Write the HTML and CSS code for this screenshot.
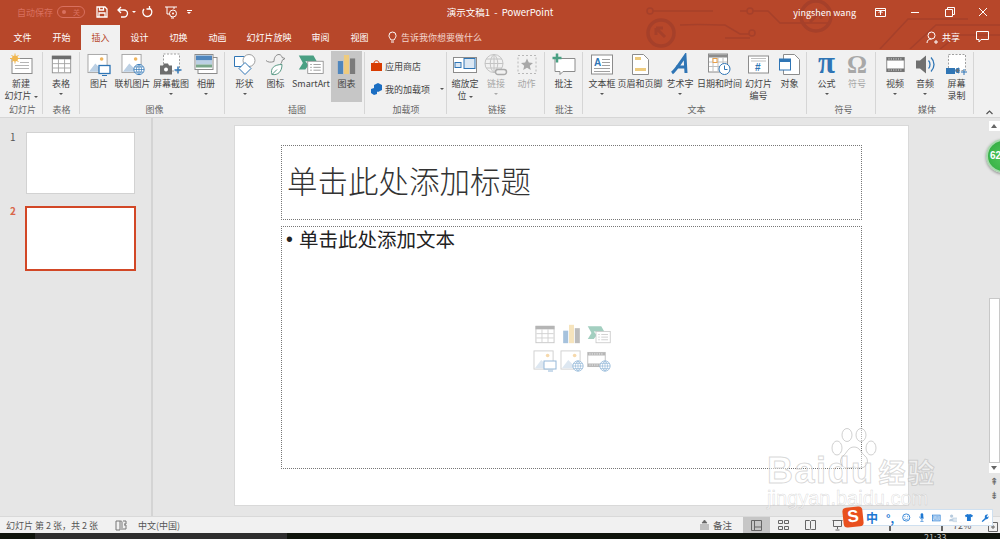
FILE: index.html
```html
<!DOCTYPE html>
<html lang="zh-CN">
<head>
    <meta charset="UTF-8">
    <title>演示文稿1 - PowerPoint</title>
    <link rel="stylesheet" href="styles.css">
</head>
<body>
    <!-- Shared icons -->
    <svg class="sprite" aria-hidden="true">
        <symbol id="i-table" viewBox="0 0 24 22">
            <rect x="1.5" y="1.5" width="21" height="19" fill="#fff" stroke="#8c8c8c"/>
            <rect x="1" y="1" width="22" height="4" fill="#6d6d6d"/>
            <path d="M8.5 5v15M15.5 5v15M2 10h20M2 15h20" stroke="#a0a0a0" fill="none"/>
        </symbol>
        <symbol id="i-chart" viewBox="0 0 22 24">
            <rect x="1" y="8" width="6" height="15" fill="#4f86bd"/>
            <rect x="8" y="1" width="6" height="22" fill="#eecb7e"/>
            <rect x="15" y="5" width="6" height="18" fill="#7b7b7b"/>
        </symbol>
        <symbol id="i-smartart" viewBox="0 0 32 24">
            <path d="M1 1h18l4 7H9l4 5-4 5H1l5-8z" fill="#4aa083"/>
            <rect x="12" y="8" width="19" height="15" fill="#fff" stroke="#8c8c8c"/>
            <path d="M15 12h2M19 12h9M15 15.500h2M19 15.500h9M15 19h2M19 19h9" stroke="#8c8c8c" fill="none"/>
        </symbol>
        <symbol id="i-picture" viewBox="0 0 24 22">
            <rect x="1" y="1" width="21" height="20" fill="#fff" stroke="#a0a0a0"/>
            <circle cx="16" cy="6" r="2" fill="#efb45c"/>
            <path d="M2 20l7-9 5 5 2-2 5 6z" fill="#bcd0e4"/>
        </symbol>
        <symbol id="i-globe" viewBox="0 0 14 14">
            <circle cx="7" cy="7" r="6" fill="#fff" stroke="#2f75b5"/>
            <path d="M1 7h12M2 4h10M2 10h10M7 1v12M7 1C3 4 3 10 7 13M7 1c4 3 4 9 0 12" fill="none" stroke="#2f75b5" stroke-width=".8"/>
        </symbol>
        <symbol id="i-film" viewBox="0 0 24 20">
            <rect x="1" y="1" width="22" height="18" fill="#fff" stroke="#707070"/>
            <path d="M1 1h22v4H1zM1 15h22v4H1z" fill="#707070"/>
            <path d="M3 3h1.500M6 3h1.500M9 3h1.500M12 3h1.500M15 3h1.500M18 3h1.500M3 17h1.500M6 17h1.500M9 17h1.500M12 17h1.500M15 17h1.500M18 17h1.500" stroke="#fff" fill="none"/>
        </symbol>
    </svg>

    <div class="app">
        <header class="top">
            <!-- Circuit pattern behind the title bar -->
            <svg class="circuit" viewBox="0 0 360 49" aria-hidden="true">
                <g fill="none" stroke="#a6402a" stroke-width="1.500">
                    <circle cx="10" cy="11" r="3"/>
                    <path d="M13 11h60"/>
                    <circle cx="21" cy="33" r="13" stroke-width="3.500"/>
                    <path d="M16 28l9 9M16 28h7M16 28v7" stroke-width="3"/>
                    <path d="M40 25c20-1 30 0 45 0l15 9h9"/>
                    <circle cx="112" cy="33" r="3"/>
                    <circle cx="110" cy="11" r="3"/>
                    <path d="M100 11h7M113 11h15l12 12h50M85 38h25"/>
                    <circle cx="176" cy="16" r="15" stroke-width="3.500"/>
                    <path d="M170 22l11-11M181 11h-8M181 11v8" stroke-width="3"/>
                    <path d="M240 49l28-30h60M270 49l26-24h64M300 49l18-14h42"/>
                </g>
            </svg>

            <div class="title-bar">
                <div class="quick">
                    <span class="autosave">自动保存</span>
                    <span class="toggle"><i></i>关</span>
                    <svg class="qa qa-save" width="12" height="12" viewBox="0 0 12 12"><path d="M1 1h8l2 2v8H1zM3.500 1v3h4V1M3 11V7h6v4" fill="none" stroke="#fff" stroke-width="1.300"/></svg>
                    <svg class="qa qa-undo" width="12" height="12" viewBox="0 0 12 12"><path d="M4 1L1 4l3 3M1 4h6a3.500 3.500 0 0 1 0 7H4" fill="none" stroke="#fff" stroke-width="1.300"/></svg>
                    <span class="caret caret-light"></span>
                    <svg class="qa qa-redo" width="12" height="12" viewBox="0 0 12 12"><path d="M9 3a4.500 4.500 0 1 1-5-1.200M3.500 0v3h3" fill="none" stroke="#fff" stroke-width="1.300" transform="matrix(-1 0 0 1 12 0)"/></svg>
                    <svg class="qa qa-show" width="14" height="13" viewBox="0 0 14 13"><path d="M1 1h12M3 1v7h3M10 1v2M7 12h3" fill="none" stroke="#fff"/><circle cx="9" cy="7.500" r="3.500" fill="none" stroke="#fff"/><circle cx="9" cy="7.500" r="1" fill="#fff"/></svg>
                    <span class="more-caret"></span>
                </div>
                <div class="doc-title">演示文稿1&nbsp; -&nbsp; PowerPoint</div>
                <div class="win">
                    <span class="user">yingshen wang</span>
                    <svg class="win-ico ico-ribbon" width="11" height="9" viewBox="0 0 11 9"><path d="M.5.500h10v8H.5zM.5 2.500h10M5.500 3v4M3.500 5l2-2 2 2" fill="none" stroke="#fff"/></svg>
                    <svg class="win-ico ico-min" width="10" height="9" viewBox="0 0 10 9"><path d="M1 4.500h8" stroke="#fff"/></svg>
                    <svg class="win-ico ico-max" width="10" height="10" viewBox="0 0 10 10"><path d="M.5 2.500h7v7h-7zM2.500 2.500v-2h7v7h-2" fill="none" stroke="#fff"/></svg>
                    <svg class="win-ico ico-close" width="10" height="10" viewBox="0 0 10 10"><path d="M1 1l8 8M9 1L1 9" stroke="#fff"/></svg>
                </div>
            </div>

            <nav class="tabs">
                <span class="tab">文件</span>
                <span class="tab">开始</span>
                <span class="tab active">插入</span>
                <span class="tab">设计</span>
                <span class="tab">切换</span>
                <span class="tab">动画</span>
                <span class="tab tab-wide">幻灯片放映</span>
                <span class="tab">审阅</span>
                <span class="tab">视图</span>
                <span class="tell">
                    <svg width="9" height="13" viewBox="0 0 9 13"><path d="M3 9C2 7 1 6.500 1 4.500a3.500 3.500 0 0 1 7 0C8 6.500 7 7 6 9zM3 11h3" fill="none" stroke="#fff"/></svg>
                    告诉我你想要做什么
                </span>
                <span class="share">
                    <svg width="12" height="13" viewBox="0 0 12 13"><circle cx="5.500" cy="4.500" r="3.500" fill="none" stroke="#fff"/><path d="M1 12c0-3 2-4 4.500-4M8 11h4M10 9v4" fill="none" stroke="#fff"/></svg>
                    共享
                </span>
                <svg class="comment" width="13" height="12" viewBox="0 0 13 12"><path d="M.5.500h12v8H5L3 11V8.500H.5z" fill="none" stroke="#fff"/></svg>
            </nav>
        </header>

        <section class="ribbon">
            <div class="group g-slides">
                <div class="items">
                    <div class="item w38">
                        <svg class="icon" width="24" height="22" viewBox="0 0 24 22"><rect x="3" y="5" width="20" height="15" fill="#fff" stroke="#8c8c8c"/><path d="M11 9h9M6 12h14M6 15h14" stroke="#b5b5b5" fill="none"/><circle cx="6" cy="5" r="3" fill="#f0b64e"/><path d="M6 0v10M1 5h10M2.500 1.500l7 7M9.500 1.500l-7 7" stroke="#f0b64e" fill="none"/></svg>
                        <span class="label">新建<br>幻灯片 <i class="caret"></i></span>
                    </div>
                </div>
                <div class="group-name">幻灯片</div>
            </div>
            <div class="group g-table">
                <div class="items">
                    <div class="item w36">
                        <svg class="icon" width="21" height="19"><use href="#i-table"/></svg>
                        <span class="label">表格</span><i class="caret"></i>
                    </div>
                </div>
                <div class="group-name">表格</div>
            </div>
            <div class="group g-images">
                <div class="items">
                    <div class="item w30">
                        <svg class="icon" width="24" height="22" viewBox="0 0 24 22"><use href="#i-picture" width="22" height="20"/><rect x="12" y="12" width="11" height="8" fill="#fff" stroke="#2f75b5" stroke-width="1.300"/><path d="M15 22h5" stroke="#2f75b5"/></svg>
                        <span class="label">图片</span>
                    </div>
                    <div class="item w37">
                        <svg class="icon" width="24" height="22" viewBox="0 0 24 22"><use href="#i-picture" width="22" height="20"/><use href="#i-globe" x="12" y="10" width="12" height="12"/></svg>
                        <span class="label">联机图片</span>
                    </div>
                    <div class="item w40">
                        <svg class="icon" width="24" height="22" viewBox="0 0 24 22"><rect x="4.500" y=".5" width="16" height="17" fill="#fff" stroke="#a0a0a0" stroke-dasharray="2 1.500"/><path d="M1 12h3l1-2h4l1 2h3v9H1z" fill="#6d6d6d"/><circle cx="7" cy="16" r="2" fill="#fff"/><path d="M19 13v7M15.500 16.500h7" stroke="#2f75b5" stroke-width="1.500"/></svg>
                        <span class="label">屏幕截图</span><i class="caret"></i>
                    </div>
                    <div class="item w30">
                        <svg class="icon" width="24" height="22" viewBox="0 0 24 22"><rect x="4" y="4" width="19" height="16" fill="#fff" stroke="#8c8c8c"/><rect x="1" y="1" width="18" height="15" fill="#fff" stroke="#8c8c8c"/><rect x="2" y="2" width="16" height="5" fill="#4f86bd"/><path d="M2 7h16v4H2z" fill="#bcd0e4"/><path d="M2 11h16v3H2z" fill="#79a689"/></svg>
                        <span class="label">相册</span><i class="caret"></i>
                    </div>
                </div>
                <div class="group-name">图像</div>
            </div>
            <div class="group g-illus">
                <div class="items">
                    <div class="item w31">
                        <svg class="icon" width="24" height="22" viewBox="0 0 24 22"><path d="M1.500 3h11v10h-11z" fill="#fff" stroke="#2f75b5"/><circle cx="16" cy="7" r="6" fill="#fff" stroke="#a0a0a0"/><path d="M12 21l-6-6 6-6 6 6z" fill="#fff" stroke="#2f75b5"/></svg>
                        <span class="label">形状</span><i class="caret"></i>
                    </div>
                    <div class="item w31">
                        <svg class="icon" width="24" height="22" viewBox="0 0 24 22"><path d="M2 7c2 2 5 2 8 1 0-4 2-7 5-7 2 0 3 2 3 3l3 1-3 2c0 2-1 3-2 4" fill="none" stroke="#8c8c8c"/><path d="M8 21c-2-6 2-10 10-10 0 7-4 11-10 10zM8 21l5-5" fill="#fff" stroke="#5a9a86"/></svg>
                        <span class="label">图标</span>
                    </div>
                    <div class="item w40">
                        <svg class="icon" width="26" height="20"><use href="#i-smartart"/></svg>
                        <span class="label">SmartArt</span>
                    </div>
                    <div class="item w31 selected">
                        <svg class="icon" width="19" height="21"><use href="#i-chart"/></svg>
                        <span class="label">图表</span>
                    </div>
                </div>
                <div class="group-name">插图</div>
            </div>
            <div class="group g-addins">
                <div class="items addins">
                    <div class="addin">
                        <svg width="11" height="12" viewBox="0 0 11 12"><path d="M0 3h11v8H0z" fill="#d83b01"/><path d="M3 3c0-3 5-3 5 0" fill="none" stroke="#d83b01"/></svg>
                        应用商店
                    </div>
                    <div class="addin">
                        <svg width="11" height="12" viewBox="0 0 11 12"><path d="M3 2l4-2 4 2v5l-4 2-1-.500V11l-3 1-3-2V6l3-1z" fill="#1b6ec2"/></svg>
                        我的加载项
                        <i class="caret caret-side"></i>
                    </div>
                </div>
                <div class="group-name">加载项</div>
            </div>
            <div class="group g-links">
                <div class="items">
                    <div class="item w32">
                        <svg class="icon" width="24" height="18" viewBox="0 0 24 18"><rect x=".5" y="2" width="23" height="15" fill="#fff" stroke="#8c8c8c"/><rect x="11" y="3" width="11" height="10" fill="#dbe7f3" stroke="#2f75b5"/><rect x="2" y="7" width="6" height="5" fill="#dbe7f3" stroke="#2f75b5"/></svg>
                        <span class="label">缩放定<br>位 <i class="caret"></i></span>
                    </div>
                    <div class="item w30 off">
                        <svg class="icon" width="24" height="22" viewBox="0 0 24 22"><circle cx="10" cy="10" r="9" fill="none" stroke="#c4c4c4"/><path d="M1 10h18M2 5.500h16M2 14.500h16M10 1v18M10 1C5 5 5 15 10 19M10 1c5 4 5 14 0 18" fill="none" stroke="#c4c4c4"/><path d="M14 16h6a2.500 2.500 0 0 1 0 5h-6a2.500 2.500 0 0 1 0-5z" fill="#f1f1f1" stroke="#aaa" stroke-width="1.500"/></svg>
                        <span class="label">链接</span><i class="caret"></i>
                    </div>
                    <div class="item w31 off">
                        <svg class="icon" width="20" height="20" viewBox="0 0 20 20"><rect x="1" y="1" width="18" height="18" fill="none" stroke="#b8b8b8" stroke-dasharray="2 2"/><path d="M10 4l1.800 4 4.200.4-3.200 2.800 1 4.300L10 13.300l-3.800 2.200 1-4.300L4 8.400 8.200 8z" fill="#a8a8a8"/></svg>
                        <span class="label">动作</span>
                    </div>
                </div>
                <div class="group-name">链接</div>
            </div>
            <div class="group g-comment">
                <div class="items">
                    <div class="item w37">
                        <svg class="icon" width="24" height="22" viewBox="0 0 24 22"><path d="M3 5h20v13H11l-3 3v-3H3z" fill="#fff" stroke="#8c8c8c"/><path d="M5 0v9M.5 4.500h9" stroke="#4aa083" stroke-width="2.500"/></svg>
                        <span class="label">批注</span>
                    </div>
                </div>
                <div class="group-name">批注</div>
            </div>
            <div class="group g-text">
                <div class="items">
                    <div class="item w32">
                        <svg class="icon" width="22" height="20" viewBox="0 0 22 20"><rect x=".5" y=".5" width="21" height="19" fill="#fff" stroke="#8c8c8c"/><text x="3" y="11" class="icon-letter">A</text><path d="M11 5h8M11 8h8M11 11h8M3 14h16M3 17h16" stroke="#a0a0a0" fill="none"/></svg>
                        <span class="label">文本框</span><i class="caret"></i>
                    </div>
                    <div class="item w44">
                        <svg class="icon" width="17" height="21" viewBox="0 0 17 21"><path d="M.5.500h11l5 5v15H.5z" fill="#fff" stroke="#8c8c8c"/><rect x="3" y="3" width="6" height="3" fill="#eecb7e"/><rect x="3" y="14" width="11" height="3" fill="#eecb7e"/></svg>
                        <span class="label">页眉和页脚</span>
                    </div>
                    <div class="item w36">
                        <svg class="icon" width="20" height="21" viewBox="0 0 20 21"><path d="M2 19c4-3 8-10 13-17l1 17M6 13h10" fill="none" stroke="#2f75b5" stroke-width="3"/></svg>
                        <span class="label">艺术字</span><i class="caret"></i>
                    </div>
                    <div class="item w43">
                        <svg class="icon" width="23" height="22" viewBox="0 0 23 22"><rect x=".5" y=".5" width="19" height="18" fill="#fff" stroke="#8c8c8c"/><rect x="1" y="1" width="18" height="3" fill="#8c8c8c"/><path d="M5 4v14M10 4v14M15 4v14M1 8.500h18M1 13h18" stroke="#c0c0c0" fill="none"/><rect x="5" y="5" width="4" height="4" fill="#fff" stroke="#e8a04a"/><circle cx="16.500" cy="15.500" r="5.500" fill="#fff" stroke="#2f75b5"/><path d="M16.500 12v4h3" fill="none" stroke="#2f75b5"/></svg>
                        <span class="label">日期和时间</span>
                    </div>
                    <div class="item w35">
                        <svg class="icon" width="21" height="18" viewBox="0 0 21 18"><rect x=".5" y=".5" width="20" height="17" fill="#fff" stroke="#8c8c8c"/><path d="M3 3h15M3 5.500h15" stroke="#c0c0c0"/><text x="7" y="15" class="icon-hash">#</text></svg>
                        <span class="label">幻灯片<br>编号</span>
                    </div>
                    <div class="item w27">
                        <svg class="icon" width="21" height="21" viewBox="0 0 21 21"><path d="M4.500.500h11l5 5v15h-16z" fill="#fff" stroke="#8c8c8c"/><rect x=".5" y="5" width="11" height="11" fill="#fff" stroke="#2f75b5"/><rect x="1" y="5" width="10" height="3" fill="#2f75b5"/></svg>
                        <span class="label">对象</span>
                    </div>
                </div>
                <div class="group-name">文本</div>
            </div>
            <div class="group g-symbols">
                <div class="items">
                    <div class="item w31">
                        <span class="glyph glyph-pi">π</span>
                        <span class="label">公式</span><i class="caret"></i>
                    </div>
                    <div class="item w30 off">
                        <span class="glyph glyph-omega">Ω</span>
                        <span class="label">符号</span>
                    </div>
                </div>
                <div class="group-name">符号</div>
            </div>
            <div class="group g-media">
                <div class="items">
                    <div class="item w30">
                        <svg class="icon" width="19" height="18"><use href="#i-film"/></svg>
                        <span class="label">视频</span><i class="caret"></i>
                    </div>
                    <div class="item w30">
                        <svg class="icon" width="21" height="20" viewBox="0 0 21 20"><path d="M1 6h4l6-5v18l-6-5H1z" fill="#707070"/><path d="M13.500 6c2 2 2 6 0 8M16 3c4 4 4 10 0 14" fill="none" stroke="#2f75b5" stroke-width="1.300"/></svg>
                        <span class="label">音频</span><i class="caret"></i>
                    </div>
                    <div class="item w33">
                        <svg class="icon" width="22" height="21" viewBox="0 0 22 21"><rect x="2.500" y=".5" width="17" height="16" fill="#fff" stroke="#a0a0a0" stroke-dasharray="2 1.500"/><rect x="0" y="14" width="9" height="6" fill="#2f75b5"/><path d="M10 15l3-1v5l-3-1zM18 15v6M15 18h6" fill="#707070" stroke="#2f75b5"/></svg>
                        <span class="label">屏幕<br>录制</span>
                    </div>
                </div>
                <div class="group-name">媒体</div>
            </div>
            <svg class="collapse" width="7" height="5" viewBox="0 0 7 5"><path d="M.5 4l3-3 3 3" fill="none" stroke="#555" stroke-width="1.200"/></svg>
        </section>

        <main class="work">
            <aside class="slides">
                <div class="slide-row">
                    <span class="num">1</span>
                    <div class="thumb"></div>
                </div>
                <div class="slide-row current">
                    <span class="num">2</span>
                    <div class="thumb"></div>
                </div>
            </aside>
            <div class="canvas">
                <div class="slide">
                    <div class="ph ph-title">单击此处添加标题</div>
                    <div class="ph ph-body">
                        <div class="body-text"><span class="bullet">•</span>单击此处添加文本</div>
                        <div class="content-icons">
                            <svg width="22" height="19"><use href="#i-table"/></svg>
                            <svg width="19" height="20"><use href="#i-chart"/></svg>
                            <svg width="24" height="19"><use href="#i-smartart"/></svg>
                            <svg width="24" height="22" viewBox="0 0 24 22"><use href="#i-picture" width="22" height="20"/><rect x="11" y="11" width="12" height="8" fill="#fff" stroke="#2f75b5"/><path d="M15 21h5" stroke="#2f75b5"/></svg>
                            <svg width="24" height="22" viewBox="0 0 24 22"><use href="#i-picture" width="22" height="20"/><use href="#i-globe" x="12" y="10" width="12" height="12"/></svg>
                            <svg width="24" height="22" viewBox="0 0 24 22"><use href="#i-film" width="19" height="19" y="0"/><use href="#i-globe" x="12" y="10" width="12" height="12"/></svg>
                        </div>
                    </div>
                </div>
            </div>
            <div class="scroll">
                <span class="sbtn"><i class="tri-up"></i></span>
                <div class="track"><div class="thumb-bar"></div></div>
                <span class="sbtn"><i class="tri-down"></i></span>
                <span class="pg">⇞</span>
                <span class="pg">⇟</span>
            </div>
        </main>

        <footer class="status">
            <span class="st-count">幻灯片 第 2 张，共 2 张</span>
            <svg class="st-book" width="12" height="11" viewBox="0 0 12 11"><path d="M1 1h4v9H1zM5 1c1 0 2 0 2 1v8M8 1h3v3H9M9 5h2v4H8" fill="none" stroke="#777"/></svg>
            <span class="st-lang">中文(中国)</span>
            <span class="st-notes">
                <svg width="11" height="10" viewBox="0 0 11 10"><path d="M5.500 0L3 3h5zM1 5h9M1 7h9M1 9h9" fill="#666" stroke="#666" stroke-width=".7"/></svg>
                备注
            </span>
            <span class="view on"><svg width="11" height="11" viewBox="0 0 11 11"><path d="M.5.500h10v10H.5zM3.500.500v10M3.500 7h7" fill="none" stroke="#666"/></svg></span>
            <span class="view"><svg width="11" height="10" viewBox="0 0 11 10"><path d="M.5.500h4v3h-4zM6.500.500h4v3h-4zM.5 6.500h4v3h-4zM6.500 6.500h4v3h-4z" fill="none" stroke="#666"/></svg></span>
            <span class="view"><svg width="11" height="10" viewBox="0 0 11 10"><path d="M.5.500h4l1 1 1-1h4v9h-4l-1-.500-1 .500h-4zM5.500 1.500v7" fill="none" stroke="#666"/></svg></span>
            <span class="view"><svg width="11" height="11" viewBox="0 0 11 11"><path d="M.5.500h10M1.500.500v6h8v-6M5.500 6.500V9M3.500 10h4" fill="none" stroke="#666"/></svg></span>
            <span class="slider"><i></i><i></i></span>
            <span class="st-zoom">72%</span>
            <svg class="st-fit" width="10" height="10" viewBox="0 0 10 10"><path d="M.5.500h9v9h-9zM3 5h4M5 3v4" fill="none" stroke="#666"/></svg>
        </footer>

        <div class="taskbar">
            <span class="task-btn"></span>
            <span class="clock">21:33</span>
        </div>
    </div>

    <!-- Things lying over the window -->
    <div class="ball">62</div>

    <div class="watermark">
        <svg class="paw" width="46" height="46" viewBox="0 0 46 46">
            <g fill="rgba(255,255,255,.45)" stroke="rgba(170,170,170,.55)">
                <ellipse cx="6" cy="20" rx="5" ry="7"/>
                <ellipse cx="16" cy="7" rx="5" ry="6.500"/>
                <ellipse cx="30" cy="7" rx="5" ry="6.500"/>
                <ellipse cx="40" cy="20" rx="5" ry="7"/>
                <path d="M23 19c6 0 7 6 11 9 5 4 2 13-6 12-3 0-3-1-5-1s-2 1-5 1c-8 1-11-8-6-12 4-3 5-9 11-9z"/>
            </g>
        </svg>
        <div class="wm-main">Bai<span class="wm-gap">du</span><span class="wm-cn">经验</span></div>
        <div class="wm-url">jingyan.baidu.com</div>
    </div>

    <div class="ime">
        <span class="ime-logo">S</span>
        <span class="ime-zh">中</span>
        <span class="ime-dot">°,</span>
        <svg width="13" height="13" viewBox="0 0 13 13"><circle cx="6.500" cy="6.500" r="5.500" fill="none" stroke="#1e78d2" stroke-width="1.300"/><path d="M4.500 4v2M8.500 4v2M3.500 8c1.500 2 4.500 2 6 0" fill="none" stroke="#1e78d2"/></svg>
        <svg width="9" height="13" viewBox="0 0 9 13"><rect x="2.500" y="0" width="4" height="8" rx="2" fill="#1e78d2"/><path d="M1 5c0 5 7 5 7 0M4.500 9v3M2 12.500h5" fill="none" stroke="#1e78d2"/></svg>
        <svg width="13" height="10" viewBox="0 0 13 10"><rect x=".5" y=".5" width="12" height="9" fill="#cfe3f7" stroke="#1e78d2"/><path d="M2 3h9M2 5h9M3 7h7" stroke="#1e78d2" stroke-dasharray="1 1" fill="none"/></svg>
        <svg width="13" height="12" viewBox="0 0 13 12"><circle cx="4" cy="3" r="2.500" fill="#b6cadd"/><path d="M0 11c0-3 2-4 4-4h2v4z" fill="#b6cadd"/><rect x="6" y="6" width="7" height="5" fill="#dbe6f0" stroke="#b6cadd"/></svg>
        <svg width="12" height="11" viewBox="0 0 12 11"><path d="M4 0l2 1 2-1 4 2-1 3-2-.500V11H3V4.500L1 5 0 2z" fill="#1e78d2"/></svg>
        <svg width="12" height="12" viewBox="0 0 12 12"><path d="M1 11l5-5c-1-3 1-6 5-5L8.500 3.500 10 5l1.500-2c.5 4-2 5.500-4 5l-5 4z" fill="#1e78d2"/></svg>
    </div>
</body>
</html>
```
FILE: styles.css
```css
* { box-sizing: border-box; }
html, body { margin: 0; height: 100%; overflow: hidden; }
body {
    font-family: "Noto Sans CJK SC", "Noto Sans", sans-serif;
    font-size: 9px;
    color: #444;
    background: #000;
    position: relative;
}
.sprite { position: absolute; width: 0; height: 0; }
.app { display: flex; flex-direction: column; width: 1000px; height: 539px; }

/* title bar and tabs */
.top { position: relative; height: 50px; background: #b7472a; color: #fff; flex: none; overflow: hidden; }
.circuit { position: absolute; top: 0; left: 640px; width: 360px; height: 49px; }
.title-bar { position: relative; display: grid; grid-template-columns: 1fr auto 1fr; align-items: center; height: 24px; }
.quick { display: flex; align-items: center; padding-left: 17px; }
.autosave { color: #d9705f; width: 40px; }
.toggle {
    display: flex; align-items: center; justify-content: space-between;
    width: 28px; height: 12px; padding: 0 4px;
    border: 1px solid #d9705f; border-radius: 6px; color: #d9705f; font-size: 7px;
}
.toggle i { width: 4px; height: 4px; background: #d9705f; border-radius: 50%; }
.qa-save { margin-left: 11px; }
.qa-undo { margin-left: 9px; }
.caret-light { margin-left: 3px; border-top-color: #fff !important; }
.qa-redo { margin-left: 5px; }
.qa-show { margin-left: 11px; }
.more-caret { margin-left: 9px; width: 5px; height: 4px; border-top: 1px solid #fff; position: relative; }
.more-caret::after {
    content: ""; position: absolute; left: 0; top: 1px;
    border: 2.5px solid transparent; border-top-color: #fff; border-bottom: 0;
}
.doc-title { font-size: 9.5px; white-space: nowrap; }
.win { display: flex; align-items: center; justify-content: flex-end; }
.user { font-size: 9px; margin-right: 19px; }
.win-ico { flex: none; }
.ico-min { margin-left: 24px; }
.ico-max { margin-left: 25px; }
.ico-close { margin-left: 23px; margin-right: 12px; }

.tabs { position: relative; display: flex; align-items: stretch; height: 26px; padding-left: 3px; }
.tab { width: 39px; display: flex; align-items: center; justify-content: center; }
.tab-wide { width: 64px; }
.tab.active { background: #f1f1f1; color: #b7472a; margin-top: 1px; }
.tell { display: flex; align-items: center; gap: 4px; margin-left: 9px; color: #f3d6cd; }
.share { display: flex; align-items: center; gap: 4px; margin-left: auto; margin-right: 16px; }
.comment { align-self: center; margin-right: 11px; }

/* ribbon */
.ribbon { position: relative; display: flex; height: 68px; background: #f1f1f1; border-bottom: 1px solid #d6d6d6; flex: none; }
.group { display: flex; flex-direction: column; position: relative; flex: none; }
.group::after { content: ""; position: absolute; right: 0; top: 2px; bottom: 3px; width: 1px; background: #d6d6d6; }
.items { display: flex; height: 54px; }
.group-name { height: 13px; line-height: 11px; text-align: center; color: #666; }
.g-slides { width: 43px; padding-left: 2px; }
.g-table { width: 37px; }
.g-images { width: 145px; padding-left: 4px; }
.g-illus { width: 140px; padding-left: 4px; }
.g-addins { width: 82px; }
.g-links { width: 98px; padding-left: 2px; }
.g-comment { width: 38px; }
.g-text { width: 224px; padding-left: 3px; }
.g-symbols { width: 69px; padding-left: 4px; }
.g-media { width: 98px; padding-left: 4px; }

.item { display: flex; flex-direction: column; align-items: center; flex: none; padding-top: 3px; }
.icon, .glyph { height: 25px; flex: none; padding-bottom: 2px; }
.label { text-align: center; line-height: 12px; white-space: nowrap; color: #444; }
.caret {
    display: inline-block; width: 0; height: 0; vertical-align: middle;
    border: 2px solid transparent; border-top: 2.5px solid #555; border-bottom: 0;
}
.item > .caret { margin-top: 3px; }
.w27 { width: 27px; } .w30 { width: 30px; } .w31 { width: 31px; } .w32 { width: 32px; }
.w33 { width: 33px; } .w35 { width: 35px; } .w36 { width: 36px; } .w37 { width: 37px; }
.w38 { width: 38px; } .w40 { width: 40px; } .w43 { width: 43px; } .w44 { width: 44px; }
.selected { background: #c6c6c6; margin: 1px 0 2px; padding-top: 2px; }
.off .label { color: #a6a6a6; }
.off > .caret { border-top-color: #aaa; }
.glyph { font-family: "Liberation Serif", serif; line-height: 23px; font-weight: bold; }
.glyph-pi { color: #2f75b5; font-size: 31px; line-height: 19px; }
.glyph-omega { color: #a8a8a8; font-size: 25px; }
.icon-letter { font: bold 10px "Liberation Sans", sans-serif; fill: #2f75b5; }
.icon-hash { font: bold 10px "Liberation Sans", sans-serif; fill: #2f75b5; }
.addins { flex-direction: column; gap: 9px; padding: 9px 0 0 6px; }
.addin { display: flex; align-items: center; gap: 3px; height: 14px; position: relative; white-space: nowrap; }
.caret-side { margin-left: 7px; }
.collapse { position: absolute; left: 986px; top: 60px; }

/* slide area */
.work { display: flex; flex: 1; min-height: 0; background: #e6e6e6; }
.slides { width: 153px; flex: none; border-right: 2px solid #d4d4d4; padding-top: 14px; }
.slide-row { display: flex; margin-bottom: 12px; }
.num { width: 26px; padding-left: 10px; font-size: 10px; line-height: 10px; color: #555; }
.thumb { width: 109px; height: 62px; background: #fff; border: 1px solid #d2d2d2; }
.current .num { color: #d9654a; font-weight: bold; }
.current .thumb { width: 111px; height: 65px; margin-left: -1px; border: 2px solid #d24726; }
.canvas { flex: 1; padding: 7px 0 0 81px; }
.slide {
    display: flex; flex-direction: column; gap: 6px;
    width: 675px; height: 381px; padding: 19px 46px 36px;
    background: #fff; border: 1px solid #d9d9d9;
}
.ph { border: 1px dotted #777; }
.ph-title {
    height: 75px; flex: none; padding-left: 5px;
    font-size: 30.5px; line-height: 68px; color: #333; font-weight: 300;
}
.ph-body { flex: 1; display: flex; flex-direction: column; position: relative; }
.body-text { font-size: 19.5px; line-height: 24px; color: #222; padding-left: 4px; display: flex; }
.bullet { width: 13px; font-family: "Liberation Sans", sans-serif; }
.content-icons {
    display: grid; grid-template-columns: 22px 22px 22px; gap: 6px 5px;
    align-items: center; justify-items: center; width: 76px;
    margin: 73px auto 0; opacity: .5;
}
.scroll { width: 14px; flex: none; display: flex; flex-direction: column; align-items: center; padding: 3px 0 0 2px; }
.sbtn { width: 11px; height: 10px; background: #fff; display: flex; align-items: center; justify-content: center; flex: none; }
.tri-up { border: 3px solid transparent; border-bottom: 4px solid #666; border-top: 0; }
.tri-down { border: 3px solid transparent; border-top: 4px solid #666; border-bottom: 0; }
.track { height: 332px; width: 11px; padding-top: 167px; flex: none; }
.thumb-bar { height: 165px; background: #fff; border: 1px solid #c8c8c8; }
.pg { font-size: 10px; line-height: 13px; color: #666; margin-top: 1px; }

/* status bar */
.status { display: flex; align-items: center; height: 17px; flex: none; background: #f1f1f1; border-top: 1px solid #d9d9d9; color: #555; padding-left: 6px; }
.st-count { width: 109px; white-space: nowrap; }
.st-book { flex: none; }
.st-lang { margin-left: 11px; }
.st-notes { display: flex; align-items: center; gap: 3px; margin-left: 519px; width: 44px; font-size: 9.5px; }
.view { width: 27px; height: 100%; display: flex; align-items: center; justify-content: center; }
.view.on { background: #c6c6c6; }
.slider { display: flex; justify-content: space-between; width: 54px; margin-left: 38px; }
.slider i { width: 2px; height: 6px; margin-top: 6px; background: #666; }
.st-zoom { margin-left: 10px; }
.st-fit { margin-left: 17px; margin-top: 4px; }

.taskbar { flex: none; height: 6px; background: #0f140c; position: relative; padding-left: 35px; overflow: hidden; }
.task-btn { display: block; width: 252px; height: 6px; background: #2e2e2e; }
.clock { position: absolute; left: 924px; top: 0; color: #bbb; font-size: 9px; line-height: 10px; }

/* overlays */
.ball {
    position: absolute; left: 986px; top: 139px; width: 34px; height: 34px; border-radius: 50%;
    background: radial-gradient(circle at 50% 55%, #4fc75a, #2fa83e);
    border: 2px solid #a9d8ae; box-shadow: 0 1px 3px rgba(0, 0, 0, .4);
    color: #fff; font: bold 10px/30px "Liberation Sans", sans-serif; padding-left: 2px;
}
.watermark { position: absolute; left: 767px; top: 428px; width: 190px; pointer-events: none; }
.paw { display: block; margin-left: 64px; }
.wm-main {
    font: bold 36px/28px "Liberation Sans", sans-serif; white-space: nowrap; margin-top: -17px;
    letter-spacing: 1.5px;
    color: rgba(255, 255, 255, .45); -webkit-text-stroke: 1px rgba(170, 170, 170, .45);
}
.wm-cn { font: bold 27px/28px "Noto Sans CJK SC", sans-serif; letter-spacing: 2px; margin-left: 4px; }
.wm-url {
    font: 20px/20px "Liberation Sans", sans-serif; margin-top: 2px; white-space: nowrap;
    color: rgba(255, 255, 255, .5); -webkit-text-stroke: .5px rgba(170, 170, 170, .45);
}
.ime {
    position: absolute; left: 845px; top: 509px; width: 148px; height: 17px;
    display: flex; align-items: center; gap: 8px; padding: 0 3px 0 15px;
    background: rgba(255, 255, 255, .96); border: 1px solid #cfe0f0;
}
.ime-logo {
    position: absolute; left: -3px; top: -3px; width: 20px; height: 20px;
    background: #e9501e; border-radius: 4px; color: #fff; transform: rotate(-6deg);
    font: bold 17px/20px "Liberation Sans", sans-serif; text-align: center;
}
.ime-zh { color: #1e78d2; font-size: 12px; line-height: 14px; font-weight: bold; margin-left: 5px; }
.ime-dot { color: #1e78d2; font-size: 11px; font-weight: bold; line-height: 12px; width: 10px; }
```
